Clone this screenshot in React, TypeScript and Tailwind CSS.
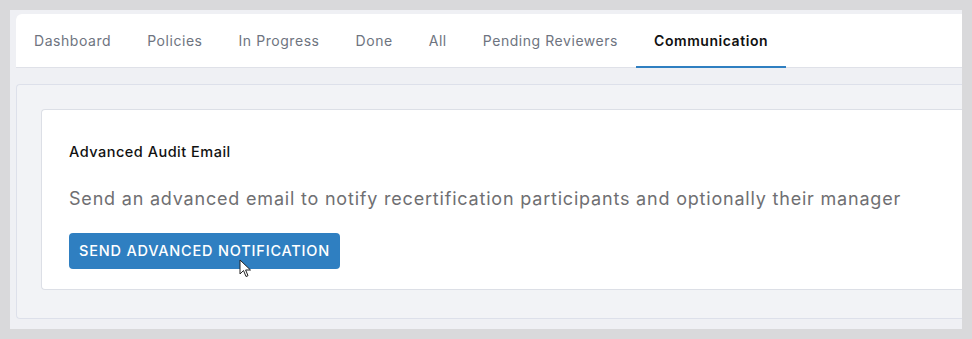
import React from "react";

const tabs = ["Dashboard", "Policies", "In Progress", "Done", "All", "Pending Reviewers", "Communication"];

export default function App() {
  return (
    <div className="w-[972px] h-[339px] bg-[#d9d9db] p-[10px] overflow-hidden" style={{ fontFamily: "Inter, 'Noto Sans', sans-serif" }}>
      <div className="h-full bg-[#eff0f4] pl-[6px] pt-[4px] overflow-hidden">
        <div className="h-[54px] bg-white rounded-tl-[6px] shadow-[inset_0_-1px_0_#dfe1e8] flex items-stretch">
          {tabs.map((t) => {
            const active = t === "Communication";
            return (
              <div
                key={t}
                className={
                  active
                    ? "px-[18px] flex items-center text-[14px] tracking-[0.55px] font-semibold text-[#111111] border-b-2 border-[#2f7fc1]"
                    : "px-[18px] pb-[2px] flex items-center text-[14px] tracking-[0.55px] text-[#6e7480]"
                }
              >
                {t}
              </div>
            );
          })}
        </div>
        <div className="mt-[16px] h-[235px] border border-r-0 border-[#dde0ea] rounded-l-[4px] bg-[#f2f3f6] pl-[24px] pt-[24px]">
          <div className="h-[181px] bg-white border border-r-0 border-[#dcdfe6] rounded-l-[4px] pl-[27px] pt-[32px]">
            <div className="text-[14.5px] leading-[20px] tracking-[0.5px] font-medium text-[#111111]">Advanced Audit Email</div>
            <div className="mt-[23px] text-[18px] leading-[28px] tracking-[0.8px] text-[#6f6f72]">
              Send an advanced email to notify recertification participants and optionally their manager
            </div>
            <div className="relative mt-[20px] w-fit">
              <button className="h-[36px] px-[10px] rounded-[4px] bg-[#2f7fc1] text-white text-[14.5px] font-medium tracking-[0.8px] uppercase">
                Send Advanced Notification
              </button>
              <svg className="absolute left-[170px] top-[26px]" width="13" height="20" viewBox="0 0 13 20">
                <path d="M1 1 L1 15 L4.5 11.5 L7 17.5 L9 16.7 L6.6 11 L11.5 11 Z" fill="white" stroke="#222" strokeWidth="1" strokeLinejoin="round" />
              </svg>
            </div>
          </div>
        </div>
      </div>
    </div>
  );
}
